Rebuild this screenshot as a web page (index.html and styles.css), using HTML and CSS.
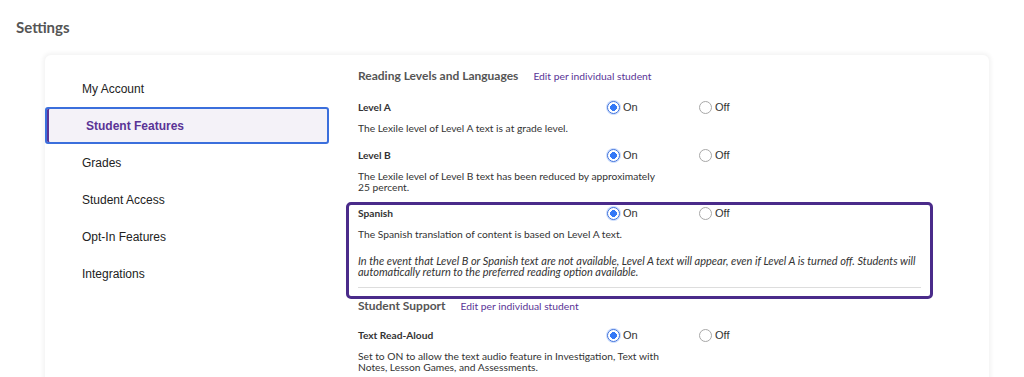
FILE: index.html
```html
<!DOCTYPE html>
<html lang="en">
<head>
    <meta charset="UTF-8">
    <meta name="viewport" content="width=device-width, initial-scale=1.0">
    <title>Settings</title>
    <link rel="stylesheet" href="styles.css">
</head>
<body>
    <h1 class="page-title">Settings</h1>

    <div class="card">
        <nav class="sidebar">
            <a class="nav-item">My Account</a>
            <a class="nav-item active">Student Features</a>
            <a class="nav-item">Grades</a>
            <a class="nav-item">Student Access</a>
            <a class="nav-item">Opt-In Features</a>
            <a class="nav-item">Integrations</a>
        </nav>

        <main class="content">
            <div class="section-head">
                <h2>Reading Levels and Languages</h2>
                <a class="edit-link">Edit per individual student</a>
            </div>

            <div class="setting">
                <div class="setting-row">
                    <span class="setting-name">Level A</span>
                    <span class="radio checked">On</span>
                    <span class="radio">Off</span>
                </div>
                <p class="setting-desc">The Lexile level of Level A text is at grade level.</p>
            </div>

            <div class="setting">
                <div class="setting-row">
                    <span class="setting-name">Level B</span>
                    <span class="radio checked">On</span>
                    <span class="radio">Off</span>
                </div>
                <p class="setting-desc">The Lexile level of Level B text has been reduced by approximately 25 percent.</p>
            </div>

            <div class="setting highlight">
                <div class="setting-row">
                    <span class="setting-name">Spanish</span>
                    <span class="radio checked">On</span>
                    <span class="radio">Off</span>
                </div>
                <p class="setting-desc">The Spanish translation of content is based on Level A text.</p>
                <p class="setting-note">In the event that Level B or Spanish text are not available, Level A text will appear, even if Level A is turned off. Students will automatically return to the preferred reading option available.</p>
                <hr class="divider">
            </div>

            <div class="section-head support">
                <h2>Student Support</h2>
                <a class="edit-link">Edit per individual student</a>
            </div>

            <div class="setting">
                <div class="setting-row">
                    <span class="setting-name">Text Read-Aloud</span>
                    <span class="radio checked">On</span>
                    <span class="radio">Off</span>
                </div>
                <p class="setting-desc">Set to ON to allow the text audio feature in Investigation, Text with Notes, Lesson Games, and Assessments.</p>
            </div>
        </main>
    </div>
</body>
</html>
```

FILE: styles.css
```css
:root {
    --text: #333;
    --heading: #555;
    --purple: #5a3496;
    --box: #4a2b8a;
    --blue: #3b6fdc;
}

* {
    margin: 0;
    padding: 0;
    box-sizing: border-box;
}

body {
    font-family: 'Lato', sans-serif;
    color: var(--text);
    background: #fff;
    padding: 0 16px;
}

.page-title {
    font-size: 15px;
    font-weight: 700;
    color: var(--heading);
    line-height: 20px;
    padding-top: 17px;
}

.card {
    display: flex;
    width: 944px;
    margin: 18px 0 0 29px;
    background: #fff;
    border-radius: 6px;
    box-shadow: 0 0 4px 2px rgba(0, 0, 0, 0.05);
    min-height: 400px;
}

.sidebar {
    width: 284px;
    flex-shrink: 0;
    padding-top: 15px;
    display: flex;
    flex-direction: column;
    font-family: 'Liberation Sans', Arial, sans-serif;
}

.nav-item {
    height: 37px;
    display: flex;
    align-items: center;
    padding-left: 37px;
    font-size: 12px;
    color: #222;
}

.nav-item.active {
    border: 2px solid var(--blue);
    border-radius: 3px;
    background: #f4f2f8;
    box-shadow: inset 2px 0 0 var(--purple);
    color: var(--purple);
    font-weight: 700;
    padding-left: 39px;
}

.content {
    margin-left: 17px;
    width: 587px;
    padding-top: 13px;
}

.section-head {
    display: flex;
    align-items: baseline;
    gap: 15px;
    padding-left: 12px;
}

.section-head h2 {
    font-size: 12px;
    font-weight: 700;
    color: var(--heading);
    line-height: 16px;
}

.edit-link {
    font-size: 10.3px;
    color: var(--purple);
}

.setting {
    padding: 0 12px;
    margin-top: 14px;
}

.section-head + .setting {
    margin-top: 16px;
}

.setting-row {
    display: grid;
    grid-template-columns: 249px 92px auto;
    align-items: center;
    font-size: 10.2px;
    line-height: 14px;
}

.setting-name {
    font-weight: 700;
    color: #333;
}

.radio {
    display: flex;
    align-items: center;
    gap: 3px;
    font-family: 'Liberation Sans', Arial, sans-serif;
    font-size: 11px;
    color: #333;
}

.radio::before {
    content: "";
    width: 11px;
    height: 11px;
    border-radius: 50%;
    border: 1px solid #a8a8a8;
    background: #fff;
}

.radio.checked::before {
    border: 1px solid var(--blue);
    background: radial-gradient(circle, #3478f6 0 3.2px, #fff 3.6px);
    box-shadow: 0 0 0 1px rgba(52, 120, 246, 0.25);
}

.setting-desc {
    font-size: 10.25px;
    line-height: 11px;
    margin-top: 9px;
    max-width: 302px;
}

.highlight {
    margin-top: 9px;
    border: 3px solid var(--box);
    border-radius: 5px;
    padding: 1px 6px 8px 9px;
}

.highlight .setting-desc {
    max-width: none;
}

.setting-note {
    font-size: 11px;
    line-height: 11px;
    font-style: italic;
    margin-top: 15px;
}

.divider {
    border: none;
    border-top: 1px solid #ddd;
    margin: 10px 3px 0 0;
}

.support {
    margin-top: -1px;
}

.support + .setting {
    margin-top: 14px;
}
```
